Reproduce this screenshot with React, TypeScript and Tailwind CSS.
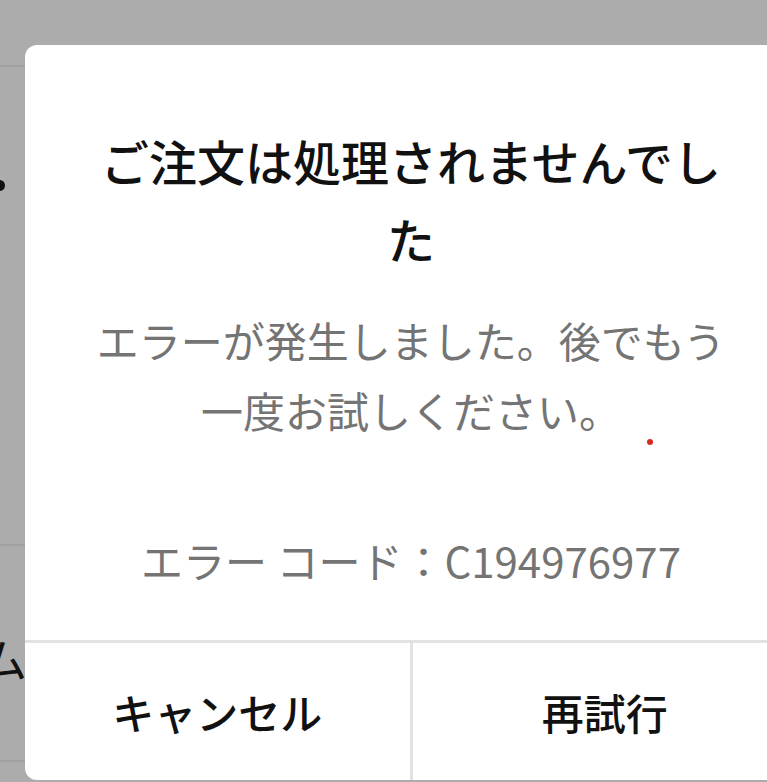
import React from "react";

const jp = {
  fontFamily: '"Noto Sans CJK JP", "Noto Sans", sans-serif',
};

export default function App() {
  return (
    <div
      className="relative w-[767px] h-[782px] overflow-hidden bg-[#acacac] text-[#111]"
      style={jp}
    >
      {/* page behind the sheet */}
      <div className="flex flex-col w-full">
        <div className="h-[67px] border-b-2 border-[#a0a0a0]" />
        <div className="h-[479px] border-b-2 border-[#a0a0a0] flex flex-col">
          <span className="mt-[113px] ml-[-6px] w-[11px] h-[11px] rounded-full bg-[#111]" />
        </div>
        <div className="h-[216px] border-b-2 border-[#a0a0a0] flex flex-col">
          <div className="h-[88px]" />
          <span className="ml-[-19px] text-[46px] leading-none">ム</span>
        </div>
      </div>

      {/* dialog */}
      <div className="absolute left-[25px] top-[45px] w-[772px] h-[735px] bg-white rounded-[12px] flex flex-col">
        <div className="flex-1 flex flex-col items-center px-[66px] pt-[76px] text-center">
          <h1 className="text-[48px] leading-[78px] font-medium text-[#111]">
            ご注文は処理されませんでした
          </h1>
          <p className="mt-[28px] text-[42px] leading-[70px] text-[#747474]">
            エラーが発生しました。後でもう一度お試しください。
          </p>
          <p className="mt-[80px] text-[42px] leading-[70px] text-[#747474]">
            エラー コード：C194976977
          </p>
        </div>
        <div className="h-[140px] border-t-[3px] border-[#e2e2e2] flex">
          <button className="flex-1 flex items-center justify-center text-[42px] font-medium text-[#111] border-r-[3px] border-[#e2e2e2]">
            キャンセル
          </button>
          <button className="flex-1 flex items-center justify-center text-[42px] font-medium text-[#111]">
            再試行
          </button>
        </div>
      </div>

      {/* small red dot */}
      <span className="absolute left-[647px] top-[439px] w-[6px] h-[6px] rounded-full bg-[#d9281c]" />
    </div>
  );
}
